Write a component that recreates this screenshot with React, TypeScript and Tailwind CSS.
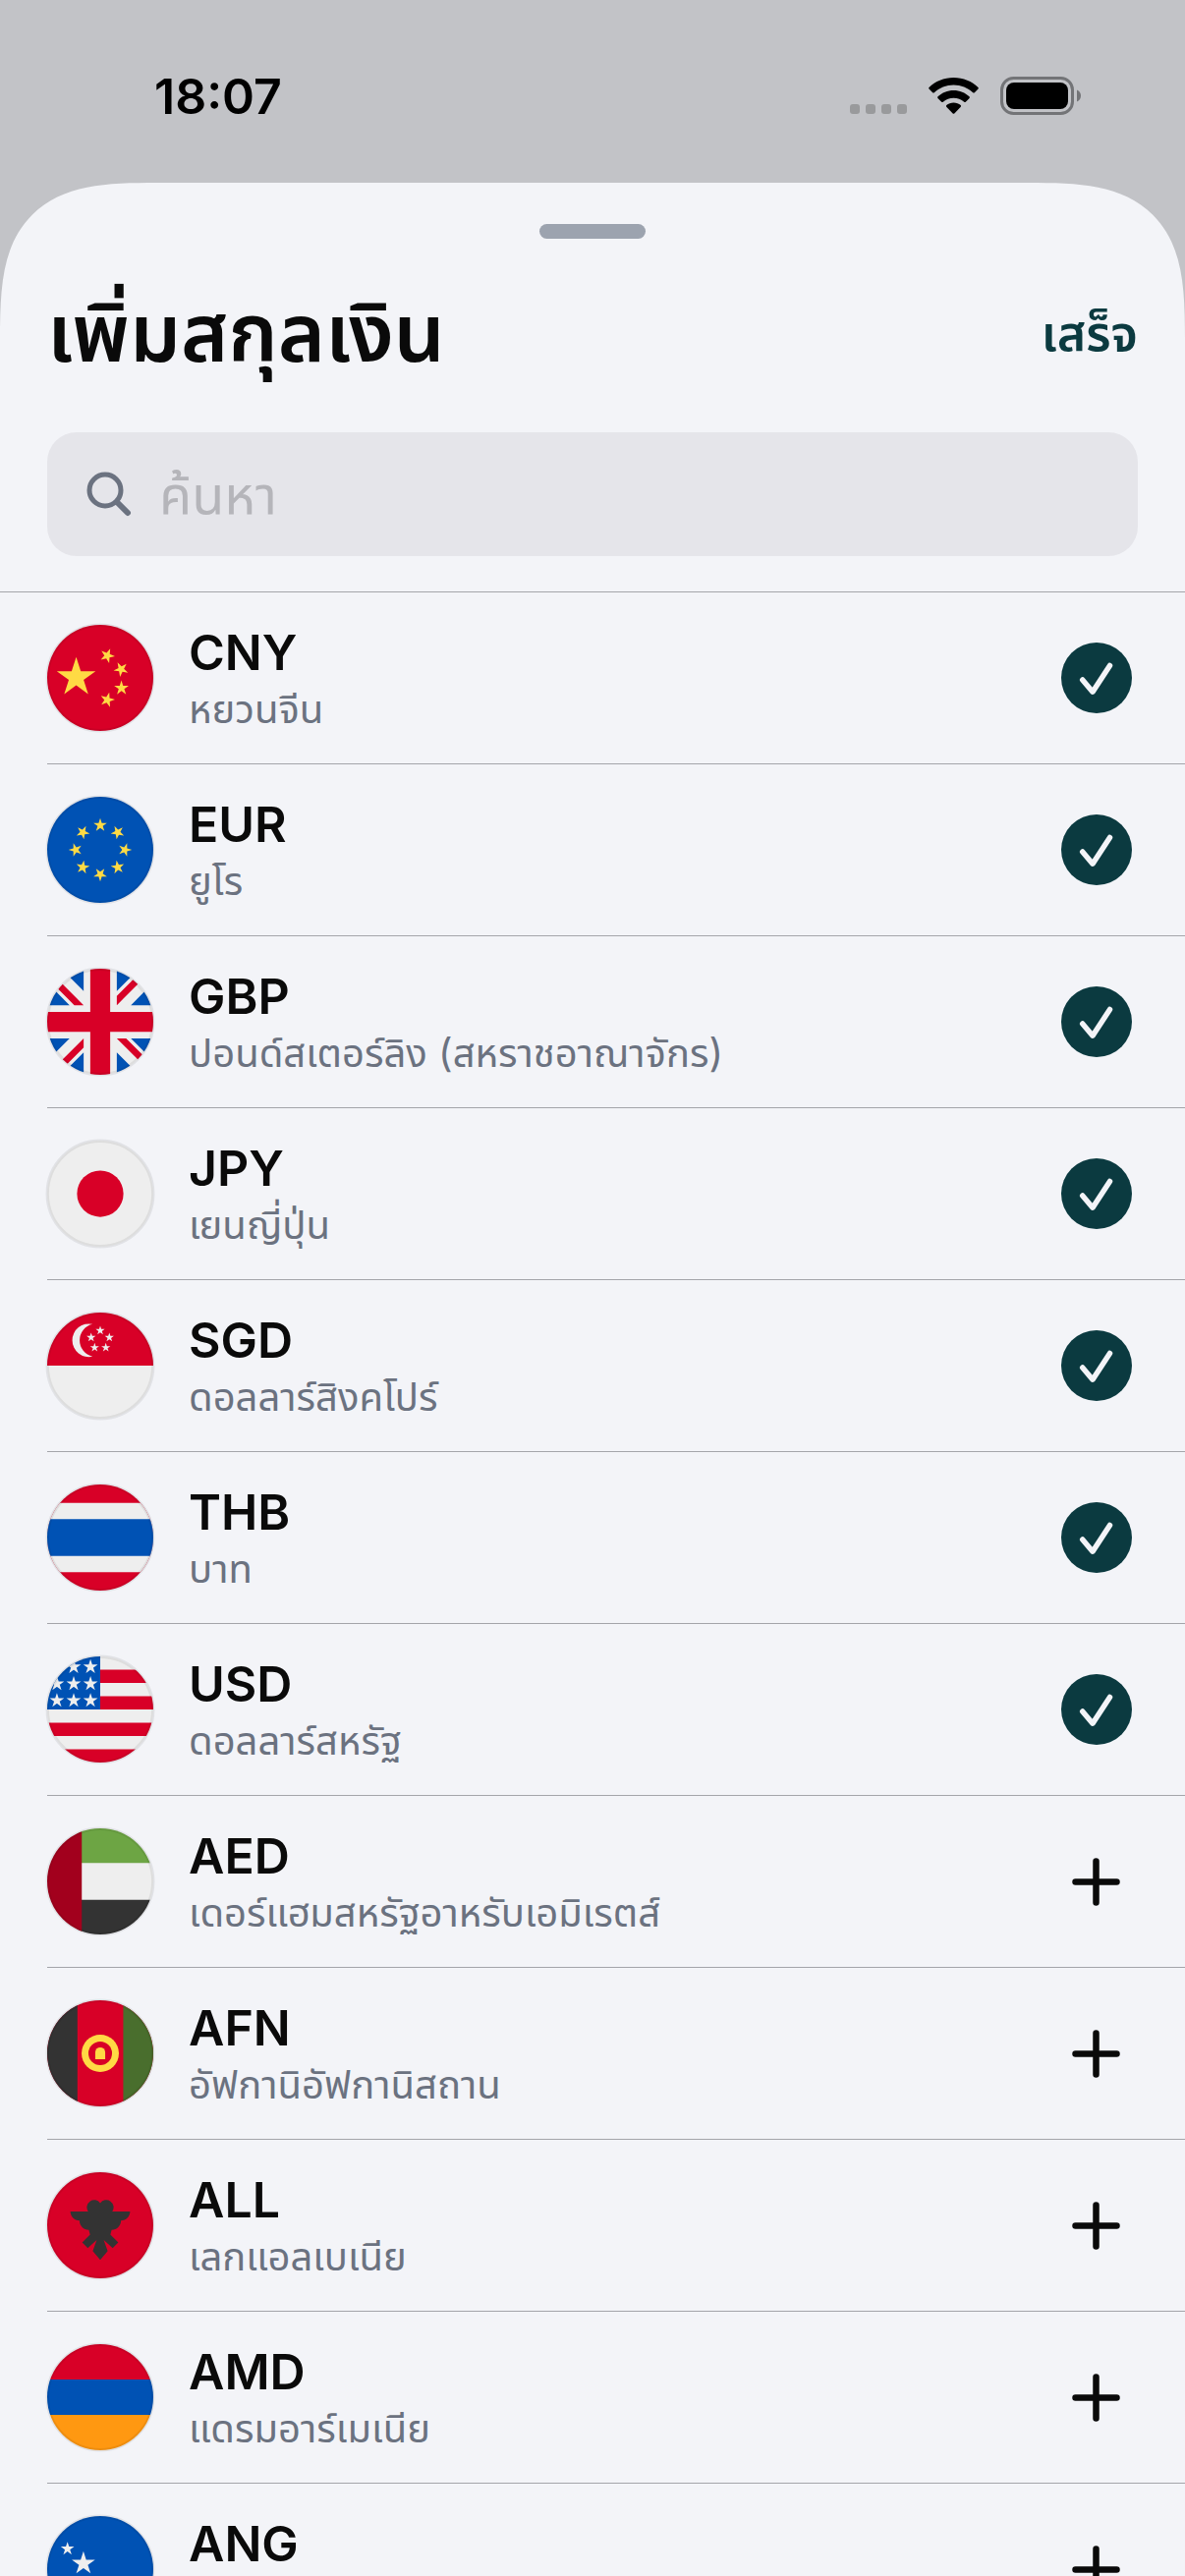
import { useState } from "react";
import type { ReactNode } from "react";

type Currency = { code: string; name: string; flag: ReactNode };

// five-pointed star centred on cx/cy
function Star({ cx, cy, r, rotate = 0 }: { cx: number; cy: number; r: number; rotate?: number }) {
  const points = Array.from({ length: 10 }, (_, i) => {
    const radius = i % 2 === 0 ? r : r * 0.382;
    const angle = ((i * 36 - 90 + rotate) * Math.PI) / 180;
    return `${(cx + radius * Math.cos(angle)).toFixed(1)},${(cy + radius * Math.sin(angle)).toFixed(1)}`;
  }).join(" ");
  return <polygon points={points} />;
}

const CURRENCIES: Currency[] = [
  {
    code: "CNY",
    name: "หยวนจีน",
    flag: (
      <>
        <path fill="#d80027" d="M0 0h512v512H0z" />
        <path
          fill="#ffda44"
          d="m140.1 155.8 22.1 68h71.5l-57.8 42.1 22.1 68-57.9-42-57.9 42 22.2-68-57.9-42.1H118zm163.4 240.7-16.9-20.8-25 9.7 14.5-22.5-16.9-20.9 25.9 6.9 14.6-22.5 1.4 26.8 26 6.9-25.1 9.6zm33.6-61 8-25.6-21.9-15.5 26.8-.4 7.9-25.6 8.7 25.4 26.8-.3-21.5 16 8.6 25.4-21.9-15.5zm45.3-147.6L370.6 212l19.2 18.7-26.5-3.8-11.8 24-4.6-26.4-26.6-3.8 23.8-12.5-4.6-26.5 19.2 18.7zm-78.2-73-2 26.7 24.9 10.1-26.1 6.4-1.9 26.8-14.1-22.8-26.1 6.4 17.3-20.5-14.2-22.7 24.9 10.1z"
        />
      </>
    ),
  },
  {
    code: "EUR",
    name: "ยูโร",
    flag: (
      <>
        <path fill="#0052b4" d="M0 0h512v512H0z" />
        <g fill="#ffda44">
          {[0, 45, 90, 135, 180, 225, 270, 315].map((deg) => (
            <Star
              key={deg}
              cx={256 + 119 * Math.sin((deg * Math.PI) / 180)}
              cy={256 - 119 * Math.cos((deg * Math.PI) / 180)}
              r={34}
              rotate={deg}
            />
          ))}
        </g>
      </>
    ),
  },
  {
    code: "GBP",
    name: "ปอนด์สเตอร์ลิง (สหราชอาณาจักร)",
    flag: (
      <>
        <path fill="#eee" d="M0 0h512v512H0z" />
        <path fill="#0052b4" d="M336 0v108L444 0Zm176 68L404 176h108zM0 176h108L0 68ZM68 0l108 108V0Zm108 512V404L68 512ZM0 444l108-108H0Zm512-108H404l108 108Zm-68 176L336 404v108z" />
        <path fill="#d80027" d="M0 0v45l131 131h45L0 0zm208 0v208H0v96h208v208h96V304h208v-96H304V0h-96zm259 0L336 131v45L512 0h-45zM176 336 0 512h45l131-131v-45zm160 0 176 176v-45L381 336h-45z" />
      </>
    ),
  },
  {
    code: "JPY",
    name: "เยนญี่ปุ่น",
    flag: (
      <>
        <path fill="#eee" d="M0 0h512v512H0z" />
        <circle cx="256" cy="256" r="112" fill="#d80027" />
      </>
    ),
  },
  {
    code: "SGD",
    name: "ดอลลาร์สิงคโปร์",
    flag: (
      <>
        <path fill="#eee" d="M0 0h512v512H0z" />
        <path fill="#d80027" d="M0 0h512v256H0z" />
        <g fill="#eee">
          <path d="M219 56a80 80 0 1 0 0 156a80 80 0 0 1 0-156z" />
          <Star cx={256} cy={87} r={23} />
          <Star cx={212} cy={120} r={23} />
          <Star cx={300} cy={120} r={23} />
          <Star cx={229} cy={169} r={23} />
          <Star cx={283} cy={169} r={23} />
        </g>
      </>
    ),
  },
  {
    code: "THB",
    name: "บาท",
    flag: (
      <>
        <path fill="#d80027" d="M0 0h512v512H0z" />
        <path fill="#eee" d="M0 89h512v334H0z" />
        <path fill="#0052b4" d="M0 167h512v178H0z" />
      </>
    ),
  },
  {
    code: "USD",
    name: "ดอลลาร์สหรัฐ",
    flag: (
      <>
        <path fill="#eee" d="M0 0h512v512H0z" />
        <path fill="#d80027" d="M224 64h288v64H224Zm0 128h288v64H256ZM0 320h512v64H0Zm0 128h512v64H0Z" />
        <path fill="#0052b4" d="M0 0h256v256H0Z" />
        <path
          fill="#eee"
          d="m187 243 57-41h-70l57 41-22-67zm-81 0 57-41H93l57 41-22-67zm-81 0 57-41H12l57 41-22-67zm162-81 57-41h-70l57 41-22-67zm-81 0 57-41H93l57 41-22-67zm-81 0 57-41H12l57 41-22-67Zm162-82 57-41h-70l57 41-22-67Zm-81 0 57-41H93l57 41-22-67zm-81 0 57-41H12l57 41-22-67Z"
        />
      </>
    ),
  },
  {
    code: "AED",
    name: "เดอร์แฮมสหรัฐอาหรับเอมิเรตส์",
    flag: (
      <>
        <path fill="#eee" d="M0 0h512v512H0z" />
        <path fill="#6da544" d="M144 0h368v167H144z" />
        <path fill="#333" d="M144 345h368v167H144z" />
        <path fill="#a2001d" d="M0 0h167v512H0z" />
      </>
    ),
  },
  {
    code: "AFN",
    name: "อัฟกานิอัฟกานิสถาน",
    flag: (
      <>
        <path fill="#d80027" d="M0 0h512v512H0z" />
        <path fill="#333" d="M0 0h146v512H0z" />
        <path fill="#496e2d" d="M367 0h145v512H367z" />
        <circle cx="256" cy="256" r="90" fill="#ffda44" />
        <circle cx="256" cy="256" r="57" fill="#d80027" />
        <path fill="#ffda44" d="M232 284v-33a24 24 0 0 1 48 0v33z" />
      </>
    ),
  },
  {
    code: "ALL",
    name: "เลกแอลเบเนีย",
    flag: (
      <>
        <path fill="#d80027" d="M0 0h512v512H0z" />
        <path
          fill="#333"
          d="M400 190h-86a33 33 0 1 0-58-41a33 33 0 1 0-58 41h-86c0 24 20 44 44 44c0 25 20 45 45 45l6 22-38 38 27 27 43-39-19 54 36 42 36-42-19-54 43 39 27-27-38-38 6-22c25 0 45-20 45-45c24 0 44-20 44-44z"
        />
      </>
    ),
  },
  {
    code: "AMD",
    name: "แดรมอาร์เมเนีย",
    flag: (
      <>
        <path fill="#d80027" d="M0 0h512v171H0z" />
        <path fill="#0052b4" d="M0 171h512v170H0z" />
        <path fill="#ff9811" d="M0 341h512v171H0z" />
      </>
    ),
  },
  {
    code: "ANG",
    name: "กิลเดอร์แอนทิลลีส",
    flag: (
      <>
        <path fill="#0052b4" d="M0 0h512v512H0z" />
        <path fill="#ffda44" d="M0 322h512v68H0z" />
        <g fill="#eee">
          <Star cx={98} cy={158} r={34} />
          <Star cx={175} cy={229} r={59} />
        </g>
      </>
    ),
  },
];

function Flag({ code, children }: { code: string; children: ReactNode }) {
  return (
    <svg viewBox="0 0 512 512" className="size-[108px] shrink-0 overflow-visible" aria-hidden="true">
      <clipPath id={`flag-${code}`}>
        <circle cx="256" cy="256" r="256" />
      </clipPath>
      <g clipPath={`url(#flag-${code})`}>{children}</g>
      <circle cx="256" cy="256" r="255" fill="none" stroke="#000" strokeOpacity="0.07" strokeWidth="16" />
    </svg>
  );
}

function StatusBar() {
  return (
    <div className="flex h-[186px] shrink-0 items-start justify-between pt-[68px] pr-[106px] pl-[157px]">
      <span className="text-[50px] leading-[60px] font-semibold text-black">18:07</span>
      <div className="flex items-center gap-[22px] pt-[9px]">
        <svg viewBox="0 0 58 40" className="h-10 w-[58px]" fill="#999a9c" aria-hidden="true">
          {[0, 16, 32, 48].map((x) => (
            <rect key={x} x={x} y="29" width="10" height="10" rx="3" />
          ))}
        </svg>
        <svg viewBox="0 0 51 40" className="h-10 w-[51px]" aria-hidden="true">
          <path d="M25.5 2C35.3 2 44.2 5.8 50.5 11.9c.5.5.5 1.1 0 1.6l-3.7 3.8c-.4.4-1.1.4-1.6 0C40 12.4 33 9.5 25.5 9.5S11 12.4 5.8 17.3c-.5.4-1.2.4-1.6 0L.5 13.5c-.5-.5-.5-1.1 0-1.6C6.8 5.8 15.7 2 25.5 2z" />
          <path d="M25.5 15c6.2 0 11.8 2.4 16 6.3.5.5.5 1.1.1 1.6l-3.8 3.8c-.5.5-1.1.5-1.6.1a16 16 0 0 0-21.4 0c-.5.4-1.1.4-1.6-.1l-3.8-3.8c-.4-.5-.4-1.1.1-1.6 4.2-3.9 9.8-6.3 16-6.3z" />
          <path d="M25.5 27.5c2.8 0 5.3 1 7.2 2.6.5.5.5 1.1.1 1.6l-6.5 6.7c-.5.5-1.1.5-1.6 0l-6.5-6.7c-.4-.5-.4-1.1.1-1.6 1.9-1.6 4.4-2.6 7.2-2.6z" />
        </svg>
        <svg viewBox="0 0 82 40" className="h-10 w-[82px]" aria-hidden="true">
          <rect x="1.5" y="2.5" width="72" height="36" rx="12" fill="none" stroke="#737477" strokeWidth="3" />
          <rect x="6" y="7" width="63" height="27" rx="8" />
          <path fill="#737477" d="M78 14.5c2.4 1 4 3.3 4 6s-1.6 5-4 6z" />
        </svg>
      </div>
    </div>
  );
}

function CurrencyRow({ item, selected, onToggle }: { item: Currency; selected: boolean; onToggle: () => void }) {
  return (
    <li className="ml-12 flex items-center gap-9 border-b border-[#a4a5aa] py-[29px] pr-[54px]">
      <Flag code={item.code}>{item.flag}</Flag>
      <div className="min-w-0 flex-1">
        <p className="text-[50px] leading-[64px] font-semibold text-[#0a0a0a]">{item.code}</p>
        <p className="text-[40px] leading-[52px] whitespace-nowrap text-[#6b7280]">{item.name}</p>
      </div>
      <button type="button" aria-label={item.code} aria-pressed={selected} onClick={onToggle} className="size-[72px] shrink-0">
        {selected ? (
          <svg viewBox="0 0 72 72" className="size-full">
            <circle cx="36" cy="36" r="36" fill="#0b3a40" />
            <path d="M21.7 38 32 50.2 49.5 23.5" fill="none" stroke="#f3f4f8" strokeWidth="5.5" strokeLinecap="round" strokeLinejoin="round" />
          </svg>
        ) : (
          <svg viewBox="0 0 72 72" className="size-full">
            <path d="M35.5 15.4v42M14.5 36.4h42" fill="none" stroke="#0a0a0a" strokeWidth="6.5" strokeLinecap="round" />
          </svg>
        )}
      </button>
    </li>
  );
}

export default function App() {
  const [query, setQuery] = useState("");
  const [selected, setSelected] = useState(["CNY", "EUR", "GBP", "JPY", "SGD", "THB", "USD"]);

  function toggle(code: string) {
    setSelected((prev) => (prev.includes(code) ? prev.filter((c) => c !== code) : [...prev, code]));
  }

  const items = CURRENCIES.filter((c) => `${c.code} ${c.name}`.toLowerCase().includes(query.toLowerCase()));

  return (
    <div className="flex h-screen flex-col overflow-hidden bg-[#c2c3c7] font-['Inter','Noto_Sans_Thai','Noto_Sans',sans-serif]">
      <StatusBar />
      <main className="flex min-h-0 flex-1 flex-col rounded-t-[112px] bg-[#f3f4f8] supports-[corner-shape:squircle]:rounded-t-[160px] supports-[corner-shape:squircle]:[corner-shape:superellipse(1.6)]">
        <header className="border-b border-[#a4a5aa] px-12 pt-[42px] pb-9">
          <div className="mx-auto h-[15px] w-[108px] rounded-lg bg-[#9ca3af]" />
          <div className="mt-9 mb-[41px] flex h-[120px] items-center justify-between">
            <h1 className="text-[82px] leading-[120px] font-semibold text-[#0a0a0a]">เพิ่มสกุลเงิน</h1>
            <button type="button" className="text-[50px] leading-[60px] font-semibold text-[#0b3a40]">เสร็จ</button>
          </div>
          <label className="flex h-[126px] items-center gap-[28px] rounded-[30px] bg-[#e5e5ea] px-10">
            <svg viewBox="0 0 46 46" className="size-[46px] shrink-0" fill="none" stroke="#6b7280" strokeLinecap="round" aria-hidden="true">
              <circle cx="19" cy="19" r="16" strokeWidth="5" />
              <path d="M31 31 42 42" strokeWidth="6" />
            </svg>
            <input
              type="text"
              aria-label="ค้นหา"
              placeholder="ค้นหา"
              value={query}
              onChange={(e) => setQuery(e.target.value)}
              className="h-full min-w-0 flex-1 bg-transparent text-[54px] text-[#0a0a0a] outline-none placeholder:text-[#b5b5ba]"
            />
          </label>
        </header>
        <ul className="min-h-0 flex-1 overflow-y-auto [scrollbar-width:none]">
          {items.map((item) => (
            <CurrencyRow key={item.code} item={item} selected={selected.includes(item.code)} onToggle={() => toggle(item.code)} />
          ))}
        </ul>
      </main>
    </div>
  );
}
